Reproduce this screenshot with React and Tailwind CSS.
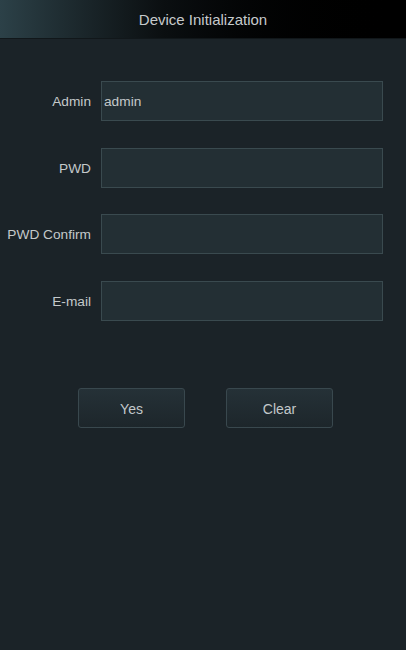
import React from "react";

const Field = ({ label, value }) => (
  <div className="flex items-center h-[40px]">
    <div className="w-[101px] pr-[10px] pt-[3px] text-right text-[13.7px] text-[#c4c9cb]">{label}</div>
    <div className="w-[282px] h-[40px] flex items-center border border-[#3a4a4f] bg-[#232f34] pl-[2px] pt-[2px] text-[13.7px] text-[#c4c9cb]">
      {value}
    </div>
  </div>
);

const App = () => {
  const fields = [
    { label: "Admin", value: "admin" },
    { label: "PWD", value: "" },
    { label: "PWD Confirm", value: "" },
    { label: "E-mail", value: "" },
  ];

  return (
    <div className="w-[406px] h-[650px] bg-[#1b2328] font-['Liberation_Sans',Arial,sans-serif]">
      {/* title bar */}
      <div className="h-[39px] flex items-center justify-center pt-[2px] bg-gradient-to-r from-[#2c4148] via-[#0b0f11] via-40% to-black text-[15px] text-[#c6cacc] border-b border-[#11171a]">
        Device Initialization
      </div>

      <div className="pt-[42px] flex flex-col gap-[26.5px]">
        {fields.map((f) => (
          <Field key={f.label} label={f.label} value={f.value} />
        ))}
      </div>

      <div className="mt-[67px] flex gap-[41px] pl-[78px]">
        <button className="w-[107px] h-[40px] pt-[3px] rounded-[3px] border border-[#39484e] bg-gradient-to-b from-[#253137] to-[#1d262b] text-[14px] text-[#c2c8ca]">
          Yes
        </button>
        <button className="w-[107px] h-[40px] pt-[3px] rounded-[3px] border border-[#39484e] bg-gradient-to-b from-[#253137] to-[#1d262b] text-[14px] text-[#c2c8ca]">
          Clear
        </button>
      </div>
    </div>
  );
};

export default App;
